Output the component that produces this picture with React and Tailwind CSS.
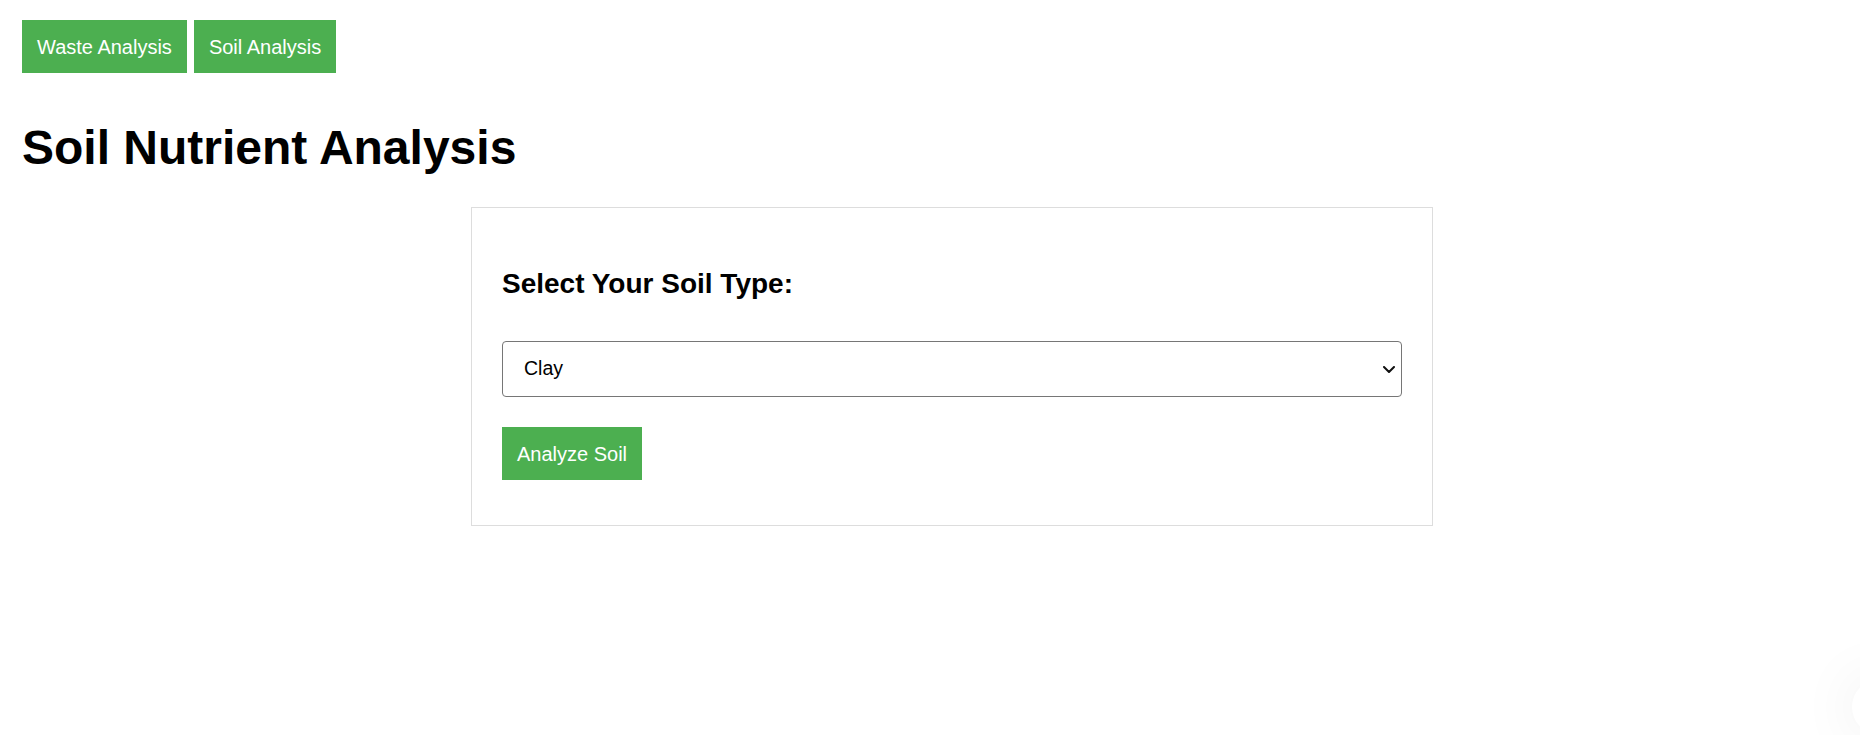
import { useState } from "react"

const font = { fontFamily: '"Liberation Sans", Arial, sans-serif' }

export default function App() {
  const [tab, setTab] = useState("soil")
  const [soilType, setSoilType] = useState("Clay")

  return (
    <div className="relative min-h-[735px] overflow-hidden bg-white pl-[22px] pt-[20px] text-black" style={font}>
      {/* Navegación */}
      <div className="flex gap-[7px]">
        <button
          onClick={() => setTab("waste")}
          className="h-[53px] bg-[#4CAF50] px-[15px] text-[20px] text-white"
        >
          Waste Analysis
        </button>
        <button
          onClick={() => setTab("soil")}
          className="h-[53px] bg-[#4CAF50] px-[15px] text-[20px] text-white"
        >
          Soil Analysis
        </button>
      </div>

      <h1 className="mt-[47px] text-[48px] font-bold leading-[55px]">Soil Nutrient Analysis</h1>

      {/* Tarjeta de selección */}
      <div className="ml-[449px] mt-[32px] h-[319px] w-[962px] border border-[#dddddd] px-[30px] pt-[30px]">
        <h2 className="mt-[30px] text-[28px] font-bold leading-[31px]">Select Your Soil Type:</h2>

        <div className="relative mt-[42px]">
          <select
            value={soilType}
            onChange={(e) => setSoilType(e.target.value)}
            className="h-[56px] w-full appearance-none rounded-[4px] border border-[#767676] bg-white pl-[21px] text-[19.5px] text-black outline-none"
            style={font}
          >
            <option>Clay</option>
            <option>Sandy</option>
            <option>Loamy</option>
            <option>Silty</option>
            <option>Peaty</option>
            <option>Chalky</option>
          </select>
          <svg
            className="pointer-events-none absolute right-[7px] top-[25px]"
            width="12"
            height="7"
            viewBox="0 0 12 7"
            fill="none"
          >
            <path d="M1 1l5 5 5-5" stroke="#111" strokeWidth="2" strokeLinecap="round" strokeLinejoin="round" />
          </svg>
        </div>

        <button className="mt-[30px] h-[53px] bg-[#4CAF50] px-[15px] text-[20px] text-white">Analyze Soil</button>
      </div>

      {/* Botón flotante */}
      <div className="absolute left-[1852px] top-[679px] h-[56px] w-[56px] rounded-full bg-white shadow-[0_0_60px_rgba(0,0,0,0.08)]" />
    </div>
  )
}
